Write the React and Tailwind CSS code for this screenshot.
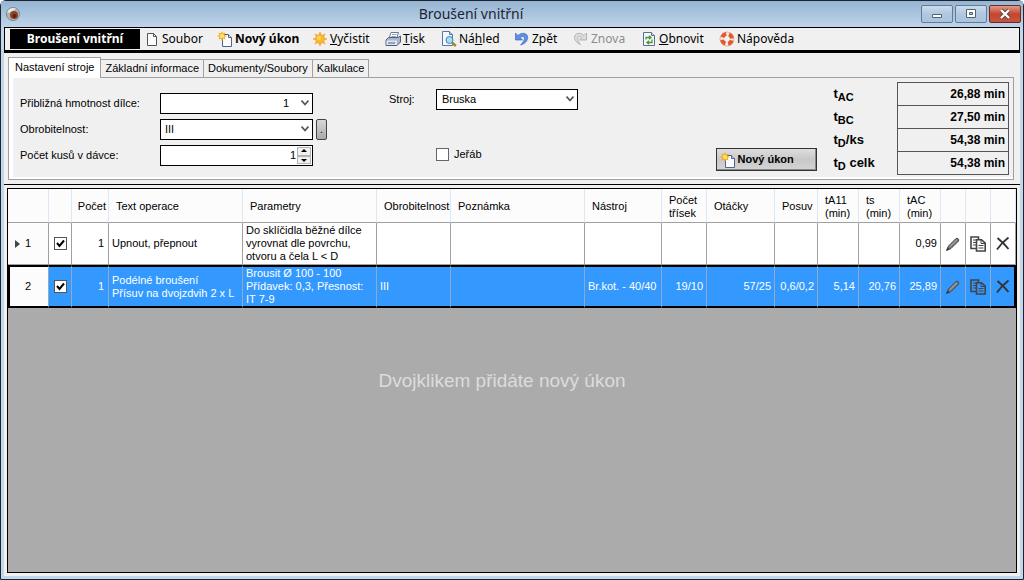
import { useState } from 'react';

const NewIcon = () => (
  <svg className="h-4 w-4 shrink-0" viewBox="0 0 16 16">
    <path d="M5.5 3.5h6l3 3v9h-9z" fill="#fdfdff" stroke="#4f6390" />
    <path d="M11.5 3.5v3h3" fill="#c9d6ee" stroke="#4f6390" />
    <path
      d="M5 0l1 2.600L8.600 1.400 7.400 4 10 5 7.400 6l1.200 2.600L6 7.400 5 10 4 7.400 1.400 8.600 2.600 6 0 5l2.600-1L1.400 1.400 4 2.600z"
      fill="#f0a818"
    />
    <circle cx="5" cy="5" r="2.200" fill="#ffdf60" />
  </svg>
);

const FileIcon = () => (
  <svg className="h-4 w-4 shrink-0" viewBox="0 0 16 16">
    <path d="M3.5 2.5h6l3 3v9h-9z" fill="#fcfcfc" stroke="#555" />
    <path d="M9.5 2.5v3h3" fill="none" stroke="#555" />
  </svg>
);

const SunIcon = () => (
  <svg className="h-4 w-4 shrink-0" viewBox="0 0 16 16">
    <g stroke="#f3b765" strokeWidth="2">
      <path d="M8 1v14M1 8h14M3 3l10 10M13 3L3 13" />
    </g>
    <circle cx="8" cy="8" r="4.5" fill="#fbb829" stroke="#f0a63a" />
    <circle cx="7" cy="7" r="2" fill="#ffd765" />
  </svg>
);

const PrintIcon = () => (
  <svg className="h-4 w-4 shrink-0" viewBox="0 0 16 16">
    <path d="M6 1.5h7.5l-2 6H4z" fill="#fff" stroke="#6c7a94" />
    <path d="M7 3.5h4.5M6.3 5.5h4.5" stroke="#8fa5cb" />
    <path d="M1 9l2.5-2.5H13L15.5 5v6L12 14.5H1z" fill="#a9b6ce" stroke="#4e5c7a" />
    <path d="M1.5 9.5H12v4.5H1.5z" fill="#dfe5f0" />
    <path d="M3 12h7" stroke="#4e5c7a" />
  </svg>
);

const PreviewIcon = () => (
  <svg className="h-4 w-4 shrink-0" viewBox="0 0 16 16">
    <path d="M1.5.5h7l3 3v11h-10z" fill="#f4f8ff" stroke="#5875a8" />
    <path d="M8.5.5v3h3" fill="#b6c9ea" stroke="#5875a8" />
    <circle cx="8.500" cy="9" r="3.500" fill="#a8dcf3" stroke="#3e86b8" />
    <path d="M11.200 11.700l3.600 3.300" stroke="#a98428" strokeWidth="2.400" />
  </svg>
);

const UndoIcon = () => (
  <svg className="h-4 w-4 shrink-0" viewBox="0 0 16 16">
    <path d="M1.500 2v7h7L6.300 6.700C8.500 4.500 11 5.800 10.300 8.300 9.800 10.300 8.500 12 6.500 14c4-1 7.200-3.900 7.200-7.500C13.700 2 8 .8 4 4.500z" fill="#5f8fe6" stroke="#2f5cb1" strokeWidth=".6" />
  </svg>
);

const RedoIcon = () => (
  <svg className="h-4 w-4 shrink-0" viewBox="0 0 16 16">
    <path d="M13.500 2v7h-7l2.200-2.300C6.500 4.500 4 5.800 4.700 8.300c.5 2 1.300 3.500 2.800 5.200C4 12 1.500 9.500 1.500 6.500 1.500 2 7 .8 11 4.500z" fill="#dcdcdc" stroke="#a6a6a6" strokeWidth=".8" />
  </svg>
);

const RefreshIcon = () => (
  <svg className="h-4 w-4 shrink-0" viewBox="0 0 16 16">
    <path d="M2.500 1.500h8l3 3v10h-11z" fill="#f2f6fd" stroke="#5e6f92" />
    <path d="M10.500 1.500v3h3" fill="#c9d6ee" stroke="#5e6f92" />
    <path d="M5 8.500V6.500h4.500M8 4.700l2 1.800-2 1.800M11 8.500v3H6.500M8 9.700l-2 1.800 2 1.800" fill="none" stroke="#4c9a2f" strokeWidth="1.300" />
  </svg>
);

const HelpIcon = () => (
  <svg className="h-4 w-4 shrink-0" viewBox="0 0 16 16">
    <circle cx="8" cy="8" r="5" fill="none" stroke="#f6ece8" strokeWidth="4" />
    <circle cx="8" cy="8" r="5" fill="none" stroke="#e4562b" strokeWidth="4" strokeDasharray="5 2.850" strokeDashoffset="-1.500" />
    <circle cx="8" cy="8" r="7" fill="none" stroke="#d88a70" strokeWidth=".6" />
  </svg>
);

const PencilIcon = () => (
  <svg className="mx-auto h-4 w-4" viewBox="0 0 16 16">
    <path d="M1.500 14.500L3.500 10l7.500-7.500c1.500-1 3.500 1 2.500 2.500L6 12.500z" fill="#7c7c7c" stroke="#444" />
    <path d="M5 10.500L11.500 4" stroke="#b4b4b4" />
    <path d="M1.500 14.500l1.200-3 1.800 1.800z" fill="#333" />
  </svg>
);

const CopyIcon = () => (
  <svg className="mx-auto h-4 w-4" viewBox="0 0 16 16" fill="none" stroke="#444" strokeWidth="1.600">
    <path d="M6 12.500H1V1h7.500v2" />
    <path d="M3 4h3M3 6.500h3M3 9h3" strokeWidth="1" />
    <path d="M6.500 3.700h5l3.700 3.500V15H6.500z" />
    <path d="M11 4v3.500h4M8.500 9.500h5M8.500 12h5" strokeWidth="1" />
  </svg>
);

const DeleteIcon = () => (
  <svg className="mx-auto h-4 w-4" viewBox="0 0 16 16">
    <path d="M2.500 2c3 2.500 7.500 6.500 11 11M13.500 1.500C9.500 4.500 5.500 8.500 2 13.500" fill="none" stroke="#333" strokeWidth="1.900" />
  </svg>
);

const Chevron = () => (
  <svg className="pointer-events-none absolute top-1.5 right-1 h-2 w-2" viewBox="0 0 8 8">
    <path d="M.5 1.500L4 5.500l3.500-4" fill="none" stroke="#555" strokeWidth="1.800" />
  </svg>
);

const TOOLBAR = [
  { label: 'Soubor', icon: FileIcon, width: 'w-[73px]' },
  { label: 'Nový úkon', icon: NewIcon, width: 'w-[95px]', bold: true },
  { label: 'Vyčistit', key: 'V', icon: SunIcon, width: 'w-[73px]' },
  { label: 'Tisk', key: 'T', icon: PrintIcon, width: 'w-[56px]' },
  { label: 'Náhled', key: 'h', icon: PreviewIcon, width: 'w-[73px]' },
  { label: 'Zpět', icon: UndoIcon, width: 'w-[59px]' },
  { label: 'Znova', icon: RedoIcon, width: 'w-[68px]', disabled: true },
  { label: 'Obnovit', key: 'O', icon: RefreshIcon, width: 'w-[78px]' },
  { label: 'Nápověda', icon: HelpIcon, width: 'w-[90px]' },
];

const TABS = ['Nastavení stroje', 'Základní informace', 'Dokumenty/Soubory', 'Kalkulace'];

const COLUMNS = [
  { title: '', width: 'w-[41px]' },
  { title: '', width: 'w-[23px]' },
  { title: 'Počet', width: 'w-[37px]', align: 'text-right' },
  { title: 'Text operace', width: 'w-[134px]' },
  { title: 'Parametry', width: 'w-[134px]' },
  { title: 'Obrobitelnost', width: 'w-[74px]' },
  { title: 'Poznámka', width: '' },
  { title: 'Nástroj', width: 'w-[77px]' },
  { title: 'Počet\ntřísek', width: 'w-[45px]' },
  { title: 'Otáčky', width: 'w-[68px]' },
  { title: 'Posuv', width: 'w-[43px]' },
  { title: 'tA11\n(min)', width: 'w-[41px]' },
  { title: 'ts\n(min)', width: 'w-[41px]' },
  { title: 'tAC\n(min)', width: 'w-[41px]' },
  { title: '', width: 'w-[25px]' },
  { title: '', width: 'w-[25px]' },
  { title: '', width: 'w-[25px]' },
];

const ROWS = [
  {
    count: '1',
    text: 'Upnout, přepnout',
    params: 'Do sklíčidla běžné dílce\nvyrovnat dle povrchu,\notvoru a čela L < D',
    values: ['', '', '', '', '', '', '', '', '0,99'],
  },
  {
    count: '1',
    text: 'Podélné broušení\nPřísuv na dvojzdvih 2 x L',
    params: 'Brousit Ø 100 - 100\nPřídavek: 0,3, Přesnost:\nIT 7-9',
    values: ['III', '', 'Br.kot. - 40/40', '19/10', '57/25', '0,6/0,2', '5,14', '20,76', '25,89'],
  },
];

const TOTALS = [
  { sub: 'AC', rest: '', value: '26,88 min' },
  { sub: 'BC', rest: '', value: '27,50 min' },
  { sub: 'D', rest: '/ks', value: '54,38 min' },
  { sub: 'D', rest: ' celk', value: '54,38 min' },
];

const ToolLabel = ({ label, hotkey }) => {
  if (!hotkey) return <span>{label}</span>;
  const i = label.indexOf(hotkey);
  return (
    <span>
      {label.slice(0, i)}
      <u>{hotkey}</u>
      {label.slice(i + 1)}
    </span>
  );
};

const TitleBar = () => (
  <header className="flex h-[26px] shrink-0 items-center bg-linear-to-b from-[#96b4d2] to-[#bfd4ea] pr-0.5 pl-1">
    <svg className="h-4 w-4 shrink-0" viewBox="0 0 16 16">
      <circle cx="8" cy="8" r="6.500" fill="#b4b4b4" stroke="#7d8790" />
      <path d="M2 7a6.500 6.500 0 0 1 9-4.500L6 6z" fill="#e8e8e8" />
      <circle cx="9" cy="9" r="4" fill="#8a4526" />
      <circle cx="9.500" cy="10" r="2" fill="#5b2510" />
    </svg>
    <h1 className="flex-1 text-center font-['Noto_Sans',sans-serif] text-[14px] leading-5 text-[#1c2530]">
      Broušení vnitřní
    </h1>
    <div className="flex gap-0.5">
      <button type="button" aria-label="Minimalizovat" className="flex h-[18px] w-8 items-center justify-center rounded-xs border border-[#5f7b98] bg-linear-to-b from-[#cbdcec] via-[#b0c8e0] to-[#a9c4de]">
        <svg className="h-3 w-3" viewBox="0 0 12 12">
          <path d="M1.500 6.500h9v3h-9z" fill="#fff" stroke="#53606e" />
        </svg>
      </button>
      <button type="button" aria-label="Maximalizovat" className="flex h-[18px] w-8 items-center justify-center rounded-xs border border-[#5f7b98] bg-linear-to-b from-[#cbdcec] via-[#b0c8e0] to-[#a9c4de]">
        <svg className="h-3 w-3" viewBox="0 0 12 12">
          <path d="M1.500 1.500h9v8h-9z" fill="#fff" stroke="#53606e" />
          <path d="M4.500 4.500h3v2h-3z" fill="#a9c4de" stroke="#53606e" />
        </svg>
      </button>
      <button type="button" aria-label="Zavřít" className="flex h-[18px] w-8 items-center justify-center rounded-xs border border-[#6b2a22] bg-linear-to-b from-[#e0998a] via-[#c4452f] to-[#c8543c]">
        <svg className="h-3 w-3" viewBox="0 0 12 12">
          <path d="M2 2l8 8M10 2l-8 8" stroke="#5b4040" strokeWidth="4" />
          <path d="M2 2l8 8M10 2l-8 8" stroke="#fff" strokeWidth="2.400" />
        </svg>
      </button>
    </div>
  </header>
);

const Toolbar = () => (
  <nav className="flex shrink-0 items-center border border-b-[3px] border-black bg-[#f0f0f0] pl-[5px] font-['Noto_Sans',sans-serif] text-[12px] leading-[22px] whitespace-nowrap">
    <strong className="mr-1 h-5 w-[130px] bg-black text-center leading-5 font-bold text-white">
      Broušení vnitřní
    </strong>
    {TOOLBAR.map(({ label, key, icon: Icon, width, bold, disabled }) => (
      <button
        key={label}
        type="button"
        disabled={disabled}
        className={`flex shrink-0 items-center gap-0.5 ${width} ${bold ? 'font-bold' : ''} ${
          disabled ? 'text-[#8d8d8d]' : 'text-black'
        }`}
      >
        <Icon />
        <ToolLabel label={label} hotkey={key} />
      </button>
    ))}
  </nav>
);

const Settings = () => {
  const [weight, setWeight] = useState('1');
  const [pieces, setPieces] = useState(1);

  return (
    <div className="flex items-start border border-[#a0a0a0] pt-1 pr-1 pb-1 pl-[11px] shadow-[inset_4px_0_0_#fff,inset_0_-2px_0_#fff]">
      <div className="grid grid-cols-[140px_156px_11px] items-center gap-y-[5px] pt-[11px]">
        <label htmlFor="weight">Přibližná hmotnost dílce:</label>
        <div className="relative w-[153px]">
          <select
            id="weight"
            value={weight}
            onChange={(e) => setWeight(e.target.value)}
            className="block h-[21px] w-full appearance-none border border-black bg-white pr-[23px] [text-align-last:right]"
          >
            <option>1</option>
          </select>
          <Chevron />
        </div>
        <span />
        <label htmlFor="machinability">Obrobitelnost:</label>
        <div className="relative w-[153px]">
          <select id="machinability" className="block h-[21px] w-full appearance-none border border-black bg-white pl-1">
            <option>III</option>
          </select>
          <Chevron />
        </div>
        <button type="button" aria-label="Vybrat obrobitelnost" className="h-[21px] w-[11px] rounded-xs border border-[#444] bg-linear-to-b from-[#d8d8d8] to-[#aaaaaa]">
          .
        </button>
        <label htmlFor="pieces">Počet kusů v dávce:</label>
        <div className="flex h-[21px] w-[153px] border border-black bg-white">
          <input
            id="pieces"
            value={pieces}
            onChange={(e) => setPieces(Number(e.target.value) || 0)}
            className="min-w-0 flex-1 text-right"
          />
          <span className="flex w-4 flex-col p-px">
            <button type="button" aria-label="Více" onClick={() => setPieces(pieces + 1)} className="flex flex-1 items-center justify-center border border-[#b4b4b4] bg-[#f0f0f0]">
              <svg className="h-1 w-2" viewBox="0 0 8 4"><path d="M4 0l3 3H1z" /></svg>
            </button>
            <button type="button" aria-label="Méně" onClick={() => setPieces(pieces - 1)} className="flex flex-1 items-center justify-center border border-[#b4b4b4] bg-[#f0f0f0]">
              <svg className="h-1 w-2" viewBox="0 0 8 4"><path d="M4 4L1 1h6z" /></svg>
            </button>
          </span>
        </div>
      </div>

      <div className="ml-[62px] grid grid-cols-[47px_142px] items-center gap-y-9 pt-[7px]">
        <label htmlFor="machine">Stroj:</label>
        <div className="relative">
          <select id="machine" className="block h-[21px] w-full appearance-none border border-black bg-white pl-[5px]">
            <option>Bruska</option>
          </select>
          <Chevron />
        </div>
        <label className="col-start-2 flex items-center gap-[5px]">
          <input type="checkbox" className="h-[13px] w-[13px] appearance-none border border-[#666] bg-white" />
          Jeřáb
        </label>
      </div>

      <button
        type="button"
        className="mb-1 ml-auto flex h-[23px] w-[101px] items-center gap-0.5 self-end border border-[#333] bg-linear-to-b from-[#dedede] via-[#c8c8c8] to-[#d4d4d4] pl-[3px] font-bold shadow-[inset_-1px_-1px_0_#888]"
      >
        <NewIcon />
        Nový úkon
      </button>

      <table className="ml-[17px] font-bold">
        <tbody>
          {TOTALS.map(({ sub, rest, value }) => (
            <tr key={sub + rest} className="h-[23px]">
              <th scope="row" className="w-[64px] text-left text-[13px] leading-4 whitespace-pre">
                t<sub className="text-[11px]">{sub}</sub>
                {rest}
              </th>
              <td className="w-[111px] border border-[#555] pr-[3px] text-right text-[12px]">{value}</td>
            </tr>
          ))}
        </tbody>
      </table>
    </div>
  );
};

const OperationsGrid = () => {
  const [current, setCurrent] = useState(1);
  const aligns = ['', '', '', 'text-right', 'text-right', 'text-right', 'text-right', 'text-right', 'text-right'];

  return (
    <section className="relative flex-1 border border-black bg-[#ababab]">
      <table className="w-full table-fixed border-separate border-spacing-0 leading-[13px]">
        <thead>
          <tr className="h-[34px] bg-[#fcfcfc]">
            {COLUMNS.map(({ title, width, align }, i) => (
              <th
                key={i}
                className={`border-r border-b border-r-[#dde8f4] border-b-[#a0a0a0] pt-0.5 font-normal whitespace-pre ${width} ${
                  align ? `${align} pr-0.5` : 'pl-[7px] text-left'
                }`}
              >
                {title}
              </th>
            ))}
          </tr>
        </thead>
        <tbody>
          {ROWS.map((row, n) => {
            const on = n === current;
            const cell = on
              ? 'border-y-2 border-r border-y-black border-r-[#8fa9c8] whitespace-pre'
              : 'border-r border-b border-[#a0a0a0] whitespace-pre';
            return (
              <tr
                key={n}
                onClick={() => setCurrent(n)}
                className={`h-[42px] ${on ? 'bg-[#3399ff] text-white' : 'bg-white text-black'}`}
              >
                <th
                  scope="row"
                  className={`bg-[#fcfcfc] font-normal text-black ${cell} ${on ? 'border-l-2 border-l-black pl-[3px]' : 'pl-[5px]'}`}
                >
                  <span className="flex items-center gap-1">
                    <svg className="h-2 w-2" viewBox="0 0 8 8">
                      {n === 0 && <path d="M2 0l5 4-5 4z" fill="#444" />}
                    </svg>
                    {n + 1}
                  </span>
                </th>
                <td className={cell}>
                  <label className="relative mx-auto block h-[13px] w-[13px]">
                    <input
                      type="checkbox"
                      defaultChecked
                      aria-label={`Úkon ${n + 1}`}
                      className="peer block h-[13px] w-[13px] appearance-none border border-[#555] bg-white"
                    />
                    <svg className="pointer-events-none absolute inset-0 hidden peer-checked:block" viewBox="0 0 13 13">
                      <path d="M3 6l2.500 3L10 3.500" fill="none" stroke="#000" strokeWidth="2" />
                    </svg>
                  </label>
                </td>
                <td className={`pr-1 text-right ${cell}`}>{row.count}</td>
                <td className={`pl-[3px] ${cell}`}>{row.text}</td>
                <td className={`pl-[3px] ${cell}`}>{row.params}</td>
                {row.values.map((value, i) => (
                  <td key={i} className={`px-[3px] ${aligns[i]} ${cell}`}>
                    {value}
                  </td>
                ))}
                <td className={cell}>
                  <button type="button" aria-label="Upravit" className="block w-full"><PencilIcon /></button>
                </td>
                <td className={cell}>
                  <button type="button" aria-label="Kopírovat" className="block w-full"><CopyIcon /></button>
                </td>
                <td className={`${cell} ${on ? 'border-r-2 border-r-black' : ''}`}>
                  <button type="button" aria-label="Smazat" className="block w-full"><DeleteIcon /></button>
                </td>
              </tr>
            );
          })}
        </tbody>
      </table>
      <p className="pointer-events-none absolute inset-0 flex items-center justify-center pt-0.5 pr-5 text-[19px] text-[#dcdcdc]">
        Dvojklikem přidáte nový úkon
      </p>
    </section>
  );
};

export default function App() {
  const [tab, setTab] = useState(0);

  return (
    <div className="flex min-h-screen flex-col rounded-t-md border border-[#1b2430] bg-[#c3d7ea] font-['Liberation_Sans',Arial,sans-serif] text-[11px] text-black">
      <TitleBar />
      <main className="mr-[3px] mb-[3px] ml-[3px] flex flex-1 flex-col bg-[#f0f0f0]">
        <Toolbar />
        <div className="pt-1 pr-1.5 pb-1 pl-1">
          <div role="tablist" className="flex items-end">
            {TABS.map((name, i) => (
              <button
                key={name}
                type="button"
                role="tab"
                aria-selected={i === tab}
                onClick={() => setTab(i)}
                className={`border border-b-0 border-[#a0a0a0] ${
                  i === tab ? '-mb-px h-[21px] bg-white px-[6px] pb-0.5' : 'h-[18px] border-l-0 bg-[#f0f0f0] px-[4px]'
                }`}
              >
                {name}
              </button>
            ))}
          </div>
          <Settings />
        </div>
        <div className="flex flex-1 flex-col border-t border-black px-[3px] pt-[3px] pb-[3px]">
          <OperationsGrid />
        </div>
      </main>
    </div>
  );
}
